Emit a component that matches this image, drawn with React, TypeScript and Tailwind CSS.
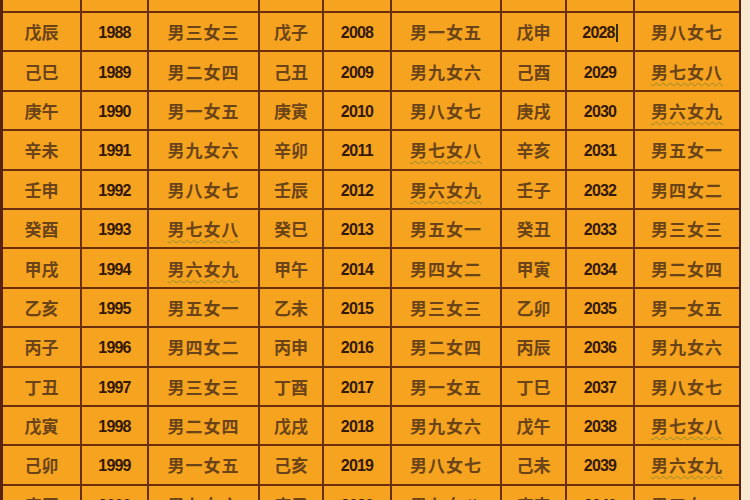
import * as React from "react";

// ---------------------------------------------------------------------------
// Data
// ---------------------------------------------------------------------------

type Triple = [string, string, string];

interface Row {
  cells: [Triple, Triple, Triple];
}

const rows: Row[] = [
  { cells: [["戊辰", "1988", "男三女三"], ["戊子", "2008", "男一女五"], ["戊申", "2028", "男八女七"]] },
  { cells: [["己巳", "1989", "男二女四"], ["己丑", "2009", "男九女六"], ["己酉", "2029", "男七女八"]] },
  { cells: [["庚午", "1990", "男一女五"], ["庚寅", "2010", "男八女七"], ["庚戌", "2030", "男六女九"]] },
  { cells: [["辛未", "1991", "男九女六"], ["辛卯", "2011", "男七女八"], ["辛亥", "2031", "男五女一"]] },
  { cells: [["壬申", "1992", "男八女七"], ["壬辰", "2012", "男六女九"], ["壬子", "2032", "男四女二"]] },
  { cells: [["癸酉", "1993", "男七女八"], ["癸巳", "2013", "男五女一"], ["癸丑", "2033", "男三女三"]] },
  { cells: [["甲戌", "1994", "男六女九"], ["甲午", "2014", "男四女二"], ["甲寅", "2034", "男二女四"]] },
  { cells: [["乙亥", "1995", "男五女一"], ["乙未", "2015", "男三女三"], ["乙卯", "2035", "男一女五"]] },
  { cells: [["丙子", "1996", "男四女二"], ["丙申", "2016", "男二女四"], ["丙辰", "2036", "男九女六"]] },
  { cells: [["丁丑", "1997", "男三女三"], ["丁酉", "2017", "男一女五"], ["丁巳", "2037", "男八女七"]] },
  { cells: [["戊寅", "1998", "男二女四"], ["戊戌", "2018", "男九女六"], ["戊午", "2038", "男七女八"]] },
  { cells: [["己卯", "1999", "男一女五"], ["己亥", "2019", "男八女七"], ["己未", "2039", "男六女九"]] },
  { cells: [["庚辰", "2000", "男九女六"], ["庚子", "2020", "男七女八"], ["庚申", "2040", "男五女一"]] },
];

// spell-check squiggle shows up under these in the screenshot
const squiggly = (s: string) => s.includes("七女八") || s.includes("六女九");

const cjk = "font-['Noto_Sans_CJK_SC','Noto_Sans',sans-serif]";
const num = "font-['Liberation_Sans',Arial,sans-serif]";

// ---------------------------------------------------------------------------
// Cells
// ---------------------------------------------------------------------------

function Cell({ children }: { children?: React.ReactNode }) {
  return (
    <div className="flex items-center justify-center overflow-hidden bg-[#f6a41f]">
      {children}
    </div>
  );
}

function GanzhiCell({ text }: { text: string }) {
  return (
    <Cell>
      <span className={`${cjk} text-[17px] font-semibold leading-none text-[#6a4318]`}>{text}</span>
    </Cell>
  );
}

function YearCell({ year }: { year: string }) {
  return (
    <Cell>
      <span className={`${num} pt-[3px] text-[16px] font-bold leading-none tracking-[-0.8px] text-[#341806]`}>
        {year}
      </span>
      {year === "2028" && <span className="ml-[1px] mt-[2px] h-[18px] w-[2px] bg-[#3a2a10]" />}
    </Cell>
  );
}

function RatioCell({ text }: { text: string }) {
  return (
    <Cell>
      <span
        className={`${cjk} text-[17px] font-semibold leading-none tracking-[1px] text-[#6a4318] ${
          squiggly(text)
            ? "underline decoration-wavy decoration-[#8f8a2a] decoration-1 underline-offset-[3px]"
            : ""
        }`}
      >
        {text}
      </span>
    </Cell>
  );
}

// ---------------------------------------------------------------------------
// App
// ---------------------------------------------------------------------------

export default function App() {
  return (
    <div className="flex h-[500px] w-[750px] overflow-hidden bg-[#f7ead0]">
      <div className="grid h-[500px] grid-cols-[77px_65px_109px_62px_66px_108px_63px_66px_104px] grid-rows-[11px_repeat(13,37.4px)] gap-[2px] overflow-hidden border-l-[3px] border-r-[2px] border-[#5a2208] bg-[#6b2e0d]">
        {/* cropped header row */}
        {Array.from({ length: 9 }).map((_, i) => (
          <Cell key={`h-${i}`} />
        ))}

        {rows.map((row, r) =>
          row.cells.map(([gz, year, ratio], c) => (
            <React.Fragment key={`${r}-${c}`}>
              <GanzhiCell text={gz} />
              <YearCell year={year} />
              <RatioCell text={ratio} />
            </React.Fragment>
          ))
        )}
      </div>
    </div>
  );
}
